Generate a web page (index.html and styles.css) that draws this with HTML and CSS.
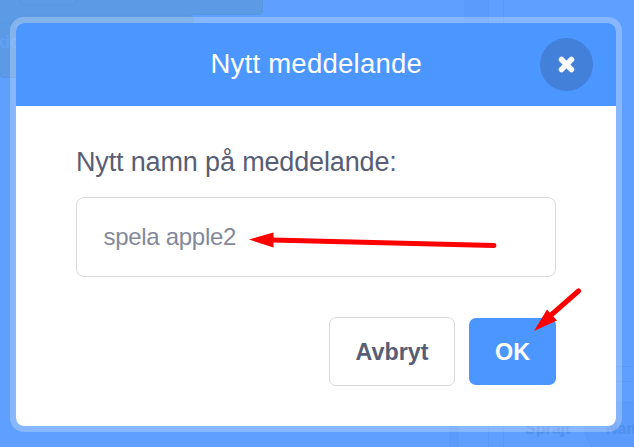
FILE: index.html
```html
<!DOCTYPE html>
<html lang="sv">
<head>
<meta charset="utf-8">
<title>Nytt meddelande</title>
<link rel="stylesheet" href="styles.css">
</head>
<body>
<svg class="workspace" width="634" height="447" viewBox="0 0 634 447" aria-hidden="true">
  <path class="block" d="M0 0H263V10Q263 14 259 14H193V78H4Q0 78 0 74Z"/>
  <path class="block-line" d="M20 0Q20 5 25 5H73Q77 5 77 0M0 23H16M25 15H189Q193 15 193 19V23M193 14.5H259Q262.500 14.500 262.500 10V0M0 73Q0 77.500 5 77.500H16"/>
  <text class="block-text" x="-5" y="48">kic</text>
  <path class="panel" d="M464 0H488V23H464ZM449 426H459V447H449Z"/>
  <path class="panel-line" d="M488.500 0V23M503.500 0V23M616 366.500H634M616 381.500H634M616 402.500H634M488.500 426V447M503.500 426V447M584.500 426Q585 440 592 447"/>
  <path class="panel" d="M584 426Q585 440 592 447H634V403H616V426Z"/>
  <text class="panel-text" x="525" y="434">Sprajt</text>
  <text class="panel-text" x="606" y="434">Namn</text>
</svg>
<main class="dialog">
  <header class="header">
    <h1 class="title">Nytt meddelande</h1>
    <button class="close" aria-label="Stäng">
      <svg width="53" height="53" viewBox="0 0 53 53"><path d="M21.500 21.500L31.500 31.500M31.500 21.500L21.500 31.500"/></svg>
    </button>
  </header>
  <section class="body">
    <label class="label" for="name">Nytt namn på meddelande:</label>
    <input class="input" id="name" type="text" value="spela apple2">
    <div class="actions">
      <button class="button">Avbryt</button>
      <button class="button primary">OK</button>
    </div>
  </section>
</main>
<svg class="arrows" width="634" height="447" viewBox="0 0 634 447" aria-hidden="true">
  <path class="shaft" d="M272 240L494 245.500M550 316L578.500 291"/>
  <path class="head" d="M249 239.500L273.500 232.500V247.500ZM534 331L547 309.500L557 320.500Z"/>
</svg>
</body>
</html>
```
FILE: styles.css
```css
* { box-sizing: border-box; }
body {
  margin: 0;
  width: 634px;
  height: 447px;
  padding: 17px 12px 15px 10px;
  overflow: hidden;
  background: #5e9fff;
  font-family: "Liberation Sans", Arial, sans-serif;
  color: #575e75;
}
.workspace, .arrows { position: absolute; top: 0; left: 0; pointer-events: none; }
.block { fill: #5c9ae6; }
.block-line { fill: none; stroke: #5896e2; }
.block-text { font-size: 18px; font-weight: 700; fill: #62a2f5; }
.panel { fill: #5a9bfb; }
.panel-line { fill: none; stroke: #5898f6; }
.panel-text { font-size: 16px; font-weight: bold; fill: #5290ee; }
.dialog {
  position: relative;
  height: 415px;
  border: 6px solid rgba(255, 255, 255, .25);
  border-radius: 14px;
  background: #fff;
  background-clip: padding-box;
  overflow: hidden;
}
.header {
  display: flex;
  align-items: center;
  height: 83px;
  padding: 0 23.500px 1px 77px;
  background: #4c97ff;
}
.title {
  flex: 1;
  margin: 0;
  text-align: center;
  font-size: 27.500px;
  font-weight: 400;
  letter-spacing: .25px;
  color: #fff;
}
.close {
  width: 53px;
  height: 53px;
  padding: 0;
  border: 0;
  border-radius: 50%;
  background: #4280d9;
}
.close svg { display: block; }
.close path { stroke: #fff; stroke-width: 5.500; stroke-linecap: round; }
.body { display: flex; flex-direction: column; padding: 40px 60px; }
.label { height: 51px; font-size: 27px; line-height: 32px; letter-spacing: -.15px; white-space: nowrap; }
.input {
  width: 480px;
  height: 80px;
  padding: 0 26.500px;
  border: 1px solid #d9d9d9;
  border-radius: 8px;
  font: 24px "Liberation Sans", Arial, sans-serif;
  letter-spacing: -.3px;
  color: #83899b;
  outline: 0;
}
.actions { display: flex; justify-content: flex-end; align-items: center; gap: 14px; margin-top: 40px; }
.button {
  width: 126px;
  height: 69px;
  padding: 2px 0 0;
  border: 1px solid #d9d9d9;
  border-radius: 7px;
  background: #fff;
  font: bold 23.300px "Liberation Sans", Arial, sans-serif;
  color: #575e75;
}
.primary { width: 87px; height: 67px; border: 0; background: #4c97ff; color: #fff; }
.shaft { fill: none; stroke: #f00; stroke-width: 5; stroke-linecap: round; }
.head { fill: #f00; }
```
